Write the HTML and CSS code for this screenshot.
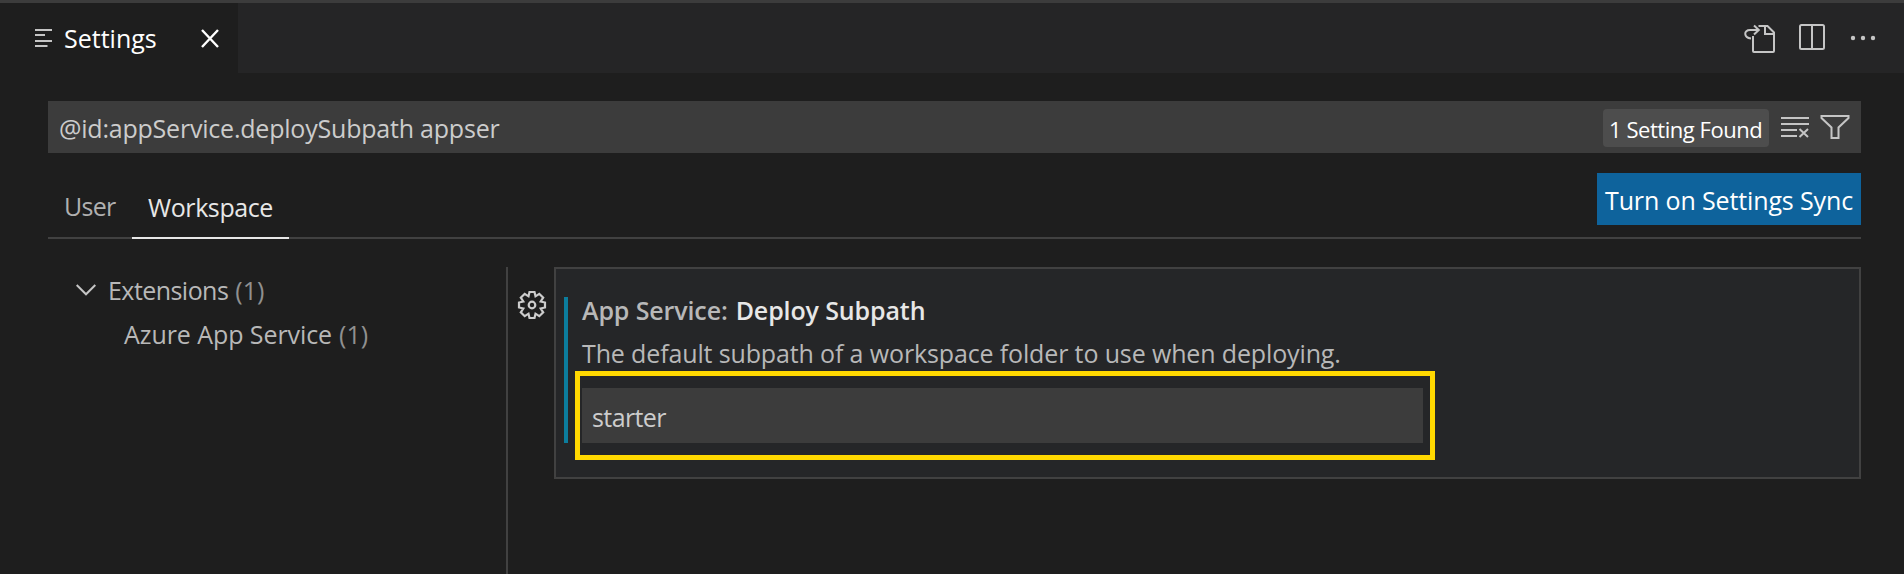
FILE: index.html
```html
<!DOCTYPE html>
<html lang="en">
<head>
<meta charset="utf-8">
<title>Settings</title>
<link rel="stylesheet" href="styles.css">
</head>
<body>
<header class="tabbar">
  <div class="tab">
    <svg class="tab-icon" width="18" height="20" viewBox="0 0 18 20"><path d="M0 2H17M0 7H10M0 13H17M0 18H12.500"/></svg>
    <span class="tab-title">Settings</span>
    <svg class="tab-close" width="18" height="19" viewBox="0 0 18 19"><path d="M1 1L17 18M17 1L1 18"/></svg>
  </div>
  <div class="actions">
    <svg width="32" height="30" viewBox="0 0 32 30"><path d="M14.500 2H23.500L30 8.500V27Q30 28 29 28H10Q9 28 9 27V12M21 2V10H30"/><path d="M7 14.500C-.5 13.500-.5 6 6 6H14.500M10 1.500L14.800 6L10 10.500"/></svg>
    <svg width="26" height="26" viewBox="0 0 26 26"><rect x="1" y="1" width="24" height="24" rx="1.500"/><path d="M13 1V25"/></svg>
    <svg class="dots" width="26" height="6" viewBox="0 0 26 6"><circle cx="3" cy="3" r="2.200"/><circle cx="13" cy="3" r="2.200"/><circle cx="23" cy="3" r="2.200"/></svg>
  </div>
</header>
<main class="editor">
  <div class="search">
    <span class="query">@id:appService.deploySubpath appser</span>
    <span class="badge">1 Setting Found</span>
    <svg class="clear" width="28" height="22" viewBox="0 0 28 22"><path d="M0 2H28M0 8H28M0 14H16M0 20H16M18.500 13L27 21M27 13L18.500 21"/></svg>
    <svg class="filter" width="30" height="25" viewBox="0 0 30 25"><path d="M1.500 1H28.500V3L18.500 12.500V23H11.500V12.500L1.500 3Z"/></svg>
  </div>
  <div class="scopes">
    <span class="scope user">User</span>
    <span class="scope active">Workspace</span>
    <button class="sync">Turn on Settings Sync</button>
  </div>
  <div class="body">
    <nav class="toc">
      <div class="toc-row">
        <svg width="20" height="12" viewBox="0 0 20 12"><path d="M.7 1L10 10.300L19.300 1"/></svg>
        <span class="group">Extensions</span><span class="count">(1)</span>
      </div>
      <div class="toc-row child"><span class="leaf">Azure App Service</span><span class="count">(1)</span></div>
    </nav>
    <div class="gutter">
      <svg width="30" height="30" viewBox="-15 -15 30 30"><path d="M-2.500-13H2.500L3.500-8.700L7.300-11.200L11.200-7.300L8.700-3.500L13-2.500V2.500L8.700 3.500L11.200 7.300L7.300 11.200L3.500 8.700L2.500 13H-2.500L-3.500 8.700L-7.300 11.200L-11.200 7.300L-8.700 3.500L-13 2.500V-2.500L-8.700-3.500L-11.200-7.300L-7.300-11.200L-3.500-8.700Z"/><circle r="3.300"/></svg>
    </div>
    <section class="setting">
      <div class="modified">
        <h2 class="title"><span class="category">App Service:</span><span>Deploy Subpath</span></h2>
        <p class="desc">The default subpath of a workspace folder to use when deploying.</p>
        <div class="value">starter</div>
      </div>
    </section>
  </div>
</main>
</body>
</html>
```
FILE: styles.css
```css
* { box-sizing: border-box; }
body {
  margin: 0;
  height: 574px;
  overflow: hidden;
  background: #1e1e1e;
  color: #cccccc;
  font: 25px/36px "Open Sans", "Noto Sans", sans-serif;
  white-space: nowrap;
}
svg { display: block; flex: none; fill: none; stroke: #c5c5c5; stroke-width: 2; }
.tabbar {
  display: flex;
  justify-content: space-between;
  height: 73px;
  border-top: 3px solid #3c3c3c;
  background: #252526;
}
.tab {
  display: flex;
  width: 238px;
  padding: 17px 19px 0 35px;
  background: #1e1e1e;
  color: #ffffff;
}
.tab-icon { margin-top: 8px; }
.tab-title { margin-left: 11px; }
.tab-close { margin: 9px 0 0 auto; stroke: #ffffff; stroke-width: 2.4; }
.actions { display: flex; gap: 24px; padding: 21px 28px 0 0; }
.actions svg:first-child { margin-right: -1px; }
.dots { margin: 11px 0 0 1px; fill: #c5c5c5; stroke: none; }

.editor { padding: 28px 43px 0 48px; }
.search {
  display: flex;
  height: 52px;
  padding: 8px 11px 0 11px;
  background: #3c3c3c;
}
.query { padding-top: 1px; letter-spacing: -0.21px; }
.badge {
  height: 38px;
  width: 166px;
  margin-left: auto;
  padding-left: 6px;
  border-radius: 4px;
  background: #4d4d4d;
  color: #ffffff;
  font-size: 22px;
  line-height: 40px;
  letter-spacing: -0.45px;
}
.clear { margin: 7px 0 0 12px; }
.filter { margin: 6px 0 0 11px; }

.scopes {
  display: flex;
  height: 86px;
  padding-top: 20px;
  border-bottom: 2px solid #414141;
}
.scope { height: 66px; padding-top: 15px; color: #b0b0b0; }
.user { width: 84px; padding-left: 16px; letter-spacing: -0.7px; }
.active { width: 157px; padding: 16px 0 0 16px; border-bottom: 2px solid #e7e7e7; color: #e7e7e7; letter-spacing: -0.4px; }
.sync {
  width: 264px;
  height: 52px;
  margin-left: auto;
  padding: 1px 0 0 8px;
  border: 0;
  background: #0e639c;
  color: #ffffff;
  font: inherit;
  text-align: left;
  letter-spacing: -0.13px;
}

.body { display: flex; height: 307px; margin-top: 28px; }
.toc { width: 460px; padding: 5px 0 0 28px; border-right: 2px solid #414141; color: #b8b8b8; }
.toc-row { display: flex; height: 44px; }
.toc-row svg { margin: 12px 12px 0 0; }
.child { padding-left: 48px; }
.group { letter-spacing: -0.55px; }
.leaf { letter-spacing: -0.07px; }
.count { margin-left: 7px; color: #909090; }
.gutter { width: 46px; padding: 23px 0 0 9px; }
.gutter svg { stroke-width: 2.2; stroke: #cccccc; }
.setting {
  flex: 1;
  height: 212px;
  padding: 28px 8px 0;
  border: 2px solid #414141;
  background: #252628;
}
.modified { height: 146px; padding-left: 14px; border-left: 4px solid #0c7d9d; }
.title { display: flex; gap: 8px; height: 43px; margin: 0; font-size: 25px; font-weight: 600; line-height: 26px; letter-spacing: -0.12px; color: #e7e7e7; }
.category { color: #b8b8b8; }
.desc { height: 48px; margin: 0; line-height: 26px; letter-spacing: -0.135px; color: #b8b8b8; }
.value {
  position: relative;
  width: 841px;
  height: 55px;
  padding: 11px 10px;
  background: #3c3c3c;
  letter-spacing: -0.6px;
}
/* Highlight frame drawn over the surroundings of the input */
.value::after {
  content: "";
  position: absolute;
  inset: -17px -12px -17px -7px;
  border: 5px solid #ffd800;
}
```
